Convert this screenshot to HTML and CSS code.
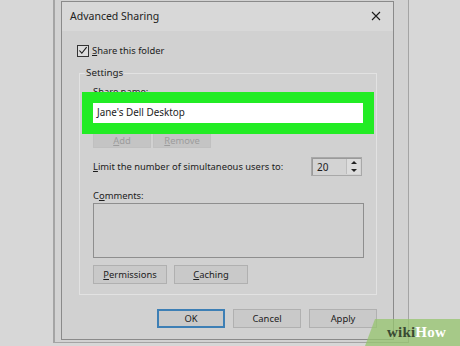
FILE: index.html
```html
<!DOCTYPE html>
<html>
<head>
<meta charset="utf-8">
<link rel="stylesheet" href="styles.css">
</head>
<body>
<div class="desktop">
  <div class="backwin"></div>
  <div class="dialog">
    <div class="titlebar">
      <span class="title">Advanced Sharing</span>
      <svg class="close" width="10" height="10" viewBox="0 0 10 10"><path d="M1 1L9 9M9 1L1 9" stroke="#1a1a1a" stroke-width="1.1" fill="none"/></svg>
    </div>
    <div class="body">
      <div class="check-row">
        <span class="checkbox"><svg width="11" height="11" viewBox="0 0 11 11"><path d="M1.5 5.5L4.2 8.5L9.5 1.8" stroke="#1a1a1a" stroke-width="1.2" fill="none"/></svg></span>
        <span><u>S</u>hare this folder</span>
      </div>
      <fieldset class="group">
        <legend>Settings</legend>
        <div class="lbl">Share name:</div>
        <div class="input">Jane's Dell Desktop</div>
        <div class="btn-row small">
          <span class="btn disabled"><u>A</u>dd</span>
          <span class="btn disabled"><u>R</u>emove</span>
        </div>
        <div class="limit-row">
          <span><u>L</u>imit the number of simultaneous users to:</span>
          <span class="spinner">
            <span class="spin-val">20</span>
            <span class="spin-btns">
              <span class="arrow up"></span>
              <span class="arrow down"></span>
            </span>
          </span>
        </div>
        <div class="lbl comments-lbl">C<u>o</u>mments:</div>
        <div class="comments"></div>
        <div class="btn-row">
          <span class="btn wide"><u>P</u>ermissions</span>
          <span class="btn wide"><u>C</u>aching</span>
        </div>
      </fieldset>
      <div class="footer">
        <span class="btn foot default">OK</span>
        <span class="btn foot">Cancel</span>
        <span class="btn foot">Apply</span>
      </div>
    </div>
  </div>
  <div class="wikihow"><span class="wiki">wiki</span><span class="how">How</span></div>
</div>
</body>
</html>
```

FILE: styles.css
```css
* { box-sizing: border-box; }
html, body { margin: 0; padding: 0; }
body {
  width: 460px;
  height: 346px;
  overflow: hidden;
  background: #d7d7d7;
  font-family: "Noto Sans", "Open Sans", sans-serif;
  font-size: 9.4px;
  color: #1c1c1c;
}
u { text-decoration: underline; text-underline-offset: 1px; }
.desktop { position: relative; width: 460px; height: 346px; }
.backwin {
  position: absolute;
  left: 53px; top: -10px;
  width: 356px; height: 353px;
  border: 1px solid #a4a4a4;
  border-left-width: 2px;
  background: #d2d2d2;
}
.dialog {
  position: absolute;
  left: 61px; top: 1px;
  width: 333px; height: 339px;
  border: 1px solid #8a8a8a;
  background: #d1d1d1;
  display: flex;
  flex-direction: column;
}
.titlebar {
  height: 29px;
  background: #d8d8d8;
  display: flex;
  align-items: center;
  justify-content: space-between;
  padding: 0 12px 2px 8px;
}
.title { font-size: 10.5px; color: #222; }
.close { display: block; }
.body {
  flex: 1;
  display: flex;
  flex-direction: column;
  padding: 13px 15px 0 15px;
}
.check-row { display: flex; align-items: center; gap: 3px; height: 13px; }
.checkbox {
  width: 12px; height: 12px;
  border: 1px solid #333;
  background: #dcdcdc;
  display: flex; align-items: center; justify-content: center;
}
.group {
  margin: 10px 0 0 2px;
  width: 298px;
  border: 1px solid #e2e2e2;
  padding: 6px 0 10px 13px;
  display: flex;
  flex-direction: column;
}
.group legend { padding: 0 1px; margin-left: -8px; color: #222; line-height: 12px; font-size: 9.8px; }
.lbl { line-height: 13px; }
.input {
  margin-top: 5px;
  width: 270px; height: 20px;
  background: #fff;
  outline: 11px solid #22ec24;
  padding: 2px 4px;
  line-height: 15px;
  font-size: 9.9px;
  position: relative;
}
.btn-row { display: flex; gap: 2px; margin-top: 10px; }
.btn {
  display: flex; align-items: center; justify-content: center;
  background: #c9c9c9;
  border: 1px solid #b0b0b0;
  height: 19px;
}
.small .btn { width: 58px; height: 15px; }
.disabled { color: #9c9c9c; background: #c4c4c4; border-color: #c0c0c0; }
.limit-row {
  margin-top: 9px;
  display: flex; align-items: center; justify-content: space-between;
  width: 269px;
}
.spinner {
  width: 51px; height: 19px;
  border: 1px solid #a8a8a8;
  background: #d3d3d3;
  display: flex; align-items: center; justify-content: space-between;
  padding: 0 1px 0 5px;
  box-shadow: inset 1px 1px 0 #9a9a9a;
  font-size: 10px;
}
.spin-btns {
  width: 14px; height: 15px;
  display: flex; flex-direction: column; justify-content: space-around; align-items: center;
  border-left: 1px solid #bdbdbd;
  background: #dcdcdc;
}
.arrow { width: 0; height: 0; border-left: 3px solid transparent; border-right: 3px solid transparent; }
.arrow.up { border-bottom: 3px solid #222; }
.arrow.down { border-top: 3px solid #222; }
.comments-lbl { margin-top: 13px; }
.comments {
  margin-top: 1px;
  width: 271px; height: 55px;
  border: 1px solid #8e8e8e;
  background: #d0d0d0;
}
.btn-row .wide { width: 74px; }
.btn-row:last-child { gap: 7px; margin-top: 7px; }
.footer {
  display: flex; justify-content: flex-end; gap: 8px;
  margin-top: 14px;
  padding-right: 1px;
}
.foot { width: 68px; }
.default { border: 2px solid #3d7fb5; }
.wikihow {
  position: absolute;
  right: 0; bottom: 0;
  width: 95px; height: 27px;
  background: rgba(150, 196, 110, 0.75);
  clip-path: polygon(10px 0, 100% 0, 100% 100%, 0 100%);
  display: flex; align-items: center;
  padding-left: 22px;
  font-family: "Liberation Serif", serif;
  font-weight: bold;
  font-size: 15px;
  letter-spacing: 0.2px;
}
.wiki { color: #3a4a32; }
.how { color: #ffffff; }
```
